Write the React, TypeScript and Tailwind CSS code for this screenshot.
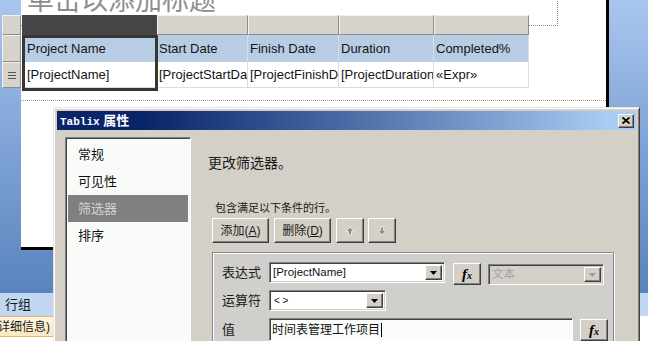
import type { ReactNode } from "react";

const handle =
  "bg-[#d6d3cd] border border-t-[#f2f1ee] border-l-[#f2f1ee] border-r-[#8e8c88] border-b-[#8e8c88]";

function Raised({ className = "", children }: { className?: string; children?: ReactNode }) {
  return (
    <div
      className={`flex items-center justify-center bg-[#d4d0c8] border border-t-white border-l-white border-r-[#404040] border-b-[#404040] shadow-[inset_-1px_-1px_0_#808080] ${className}`}
    >
      {children}
    </div>
  );
}

function DropArrow({ disabled }: { disabled?: boolean }) {
  return (
    <Raised className="w-[17px] h-full shrink-0">
      <svg width="7" height="4" viewBox="0 0 7 4">
        <path d="M0 0h7L3.5 4z" fill={disabled ? "#9a9a9a" : "#000"} />
      </svg>
    </Raised>
  );
}

function Combo({ width, text, disabled, small }: { width: string; text: string; disabled?: boolean; small?: boolean }) {
  return (
    <div
      className={`${width} h-[21px] flex p-[2px] border border-t-[#808080] border-l-[#808080] border-r-white border-b-white shadow-[inset_1px_1px_0_#404040,inset_-1px_-1px_0_#d4d0c8] ${
        disabled ? "bg-[#d4d0c8]" : "bg-white"
      }`}
    >
      <div
        className={`flex-1 flex items-center pl-[1px] whitespace-nowrap overflow-hidden ${
          small ? "text-[10px] pl-[2px]" : "text-[11.5px]"
        } ${disabled ? "text-[#a3a3a3]" : "text-[#111]"}`}
      >
        {text}
      </div>
      <DropArrow disabled={disabled} />
    </div>
  );
}

function Fx({ className = "" }: { className?: string }) {
  return (
    <Raised className={`w-[28px] h-[22px] ${className}`}>
      <span className="font-['Liberation_Serif',serif] italic font-bold text-[15px] leading-none text-black">
        f<span className="text-[10px]">x</span>
      </span>
    </Raised>
  );
}

function Arrow({ up }: { up?: boolean }) {
  return (
    <svg width="10" height="10" viewBox="0 0 10 10">
      <path
        d={up ? "M5 1l4 4.5H6.5V9h-3V5.5H1z" : "M5 9l4-4.5H6.5V1h-3v3.5H1z"}
        fill="#8f8f8f"
        stroke="#fbfbfb"
        strokeWidth="0.7"
      />
    </svg>
  );
}

function ReportTable() {
  const heads = ["Project Name", "Start Date", "Finish Date", "Duration", "Completed%"];
  const data = ["[ProjectName]", "[ProjectStartDate]", "[ProjectFinishDate]", "[ProjectDuration]", "«Expr»"];
  return (
    <div className="relative ml-[1px] w-[507px]">
      <div className="grid grid-cols-[135px_91px_91px_95px_95px] text-[13px]">
        <div className="h-[20px] bg-[#454545]" />
        {[1, 2, 3, 4].map((i) => (
          <div key={i} className={`h-[20px] ${handle}`} />
        ))}
        {heads.map((h, i) => (
          <div
            key={h}
            className={`h-[27px] flex items-center bg-[#b8cce4] border-r border-[#d3dfee] text-[#141414] whitespace-nowrap overflow-hidden ${
              i === 0 ? "pl-[5px]" : "pl-[2px]"
            }`}
          >
            {h}
          </div>
        ))}
        {data.map((d, i) => (
          <div
            key={d}
            className={`h-[26px] flex items-center bg-white border-r border-b border-[#dcdcdc] text-[#141414] whitespace-nowrap overflow-hidden ${
              i === 0 ? "pl-[5px]" : "pl-[2px]"
            }`}
          >
            {d}
          </div>
        ))}
      </div>
      <div className="absolute left-0 top-[20px] w-[136px] h-[56px] border-[3px] border-[#363636]" />
    </div>
  );
}

function FilterDialog() {
  const pages = ["常规", "可见性", "筛选器", "排序"];
  return (
    <div className="absolute left-[53px] top-[107px] w-[587px] h-[240px] p-[3px] bg-[#d4d0c8] border border-t-[#e4e2dc] border-l-[#e4e2dc] border-r-[#404040] border-b-[#404040] shadow-[inset_1px_1px_0_#fff,inset_-1px_-1px_0_#808080]">
      <div className="h-[19px] flex items-center justify-between pl-[3px] pr-[2px] bg-linear-to-r from-[#0a246a] from-15% to-[#a8ccf2] to-95%">
        <span className="text-white font-bold text-[13px] leading-none">
          <span className="font-['Liberation_Mono',monospace] text-[11px]">Tablix</span> 属性
        </span>
        <Raised className="w-[16px] h-[14px]">
          <svg width="8" height="7" viewBox="0 0 8 7">
            <path d="M0.5 0.5l7 6M7.5 0.5l-7 6" stroke="#000" strokeWidth="1.8" />
          </svg>
        </Raised>
      </div>

      <div className="flex pt-[7px] pl-[8px]">
        <div className="w-[126px] h-[220px] p-[2px] bg-[#f9fbf9] border border-t-[#808080] border-l-[#808080] border-r-white border-b-white shadow-[inset_1px_1px_0_#404040]">
          <div className="pt-[1px]">
            {pages.map((p, i) => (
              <div
                key={p}
                className={`h-[27px] flex items-center pl-[10px] text-[13px] ${
                  i === 2 ? "bg-[#808080] text-[#d2d2d2]" : "text-[#111]"
                }`}
              >
                {p}
              </div>
            ))}
          </div>
        </div>

        <div className="flex flex-col pl-[21px]">
          <div className="mt-[18px] -ml-[4px] text-[14px] leading-[16px] text-[#1a1a1a]">更改筛选器。</div>
          <div className="mt-[30px] ml-[3px] text-[11px] leading-[14px] text-[#1a1a1a]">包含满足以下条件的行。</div>
          <div className="mt-[3px] flex text-[12px] text-[#1a1a1a]">
            <Raised className="w-[57px] h-[25px]">
              添加(<span className="underline">A</span>)
            </Raised>
            <Raised className="ml-[5px] w-[57px] h-[25px]">
              删除(<span className="underline">D</span>)
            </Raised>
            <Raised className="ml-[5px] w-[28px] h-[25px]">
              <Arrow up />
            </Raised>
            <Raised className="ml-[4px] w-[28px] h-[25px]">
              <Arrow />
            </Raised>
          </div>

          <div className="mt-[9px] w-[402px] h-[120px] pl-[9px] pt-[9px] bg-[#d0cfcc] border border-[#8a8a8a] shadow-[inset_1px_1px_0_#fff,1px_1px_0_#fff] flex flex-col gap-[7px] text-[13px] text-[#1a1a1a]">
            <div className="h-[21px] flex items-start">
              <div className="w-[47px] h-[21px] flex items-center">表达式</div>
              <Combo width="w-[176px]" text="[ProjectName]" />
              <Fx className="ml-[8px] mt-[1px]" />
              <div className="ml-[7px] mt-[2px]">
                <Combo width="w-[116px]" text="文本" disabled />
              </div>
            </div>
            <div className="h-[21px] flex items-start">
              <div className="w-[47px] h-[21px] flex items-center">运算符</div>
              <Combo width="w-[117px]" text="< >" small />
            </div>
            <div className="h-[23px] flex items-start">
              <div className="w-[47px] h-[23px] flex items-center">值</div>
              <div className="w-[304px] h-[23px] flex items-center pl-[2px] bg-[#fbfdfb] border border-t-[#808080] border-l-[#808080] border-r-white border-b-white shadow-[inset_1px_1px_0_#404040] text-[12px] text-[#111]">
                时间表管理工作项目
                <span className="ml-[1px] w-[1px] h-[14px] bg-black" />
              </div>
              <Fx className="ml-[7px] mt-[1px]" />
            </div>
          </div>
        </div>
      </div>
    </div>
  );
}

export default function App() {
  return (
    <div className="relative w-[648px] h-[341px] overflow-hidden bg-white font-['Liberation_Sans','Noto_Sans_CJK_SC',sans-serif]">
      <div className="flex h-[293px] bg-linear-to-b from-[#a9c6ee] via-[#7fa3d6] to-[#5a83bd]">
        <div className="w-[21px] shrink-0 pt-[15px] pl-[2px] flex flex-col">
          <div className={`h-[20px] ${handle}`} />
          <div className={`h-[27px] ${handle}`} />
          <div className={`h-[26px] flex items-center justify-center ${handle}`}>
            <svg width="8" height="7" viewBox="0 0 8 7">
              <path d="M0 0.5h8M0 3.5h8M0 6.5h8" stroke="#555" strokeWidth="1" />
            </svg>
          </div>
        </div>

        <div className="relative w-[588px] h-[250px] shrink-0 bg-white border-r-[3px] border-b-[3px] border-black">
          <div className="absolute left-0 top-[-2px] w-[537px] h-[28px] border-r border-b border-dotted border-[#8a8a8a]" />
          <div className="relative h-[15px] flow-root">
            <p className="-mt-[14px] ml-[6px] text-[27px] leading-[30px] text-[#8e8e8e] whitespace-nowrap">
              单击以添加标题
            </p>
          </div>
          <ReportTable />
          <div className="h-[13px] border-b border-dotted border-[#9a9a9a]" />
        </div>
      </div>

      <div className="h-[23px] pl-[5px] flex items-center bg-[#c2d8f2] text-[13px] text-[#1a1a1a]">行组</div>
      <div className="w-[170px] h-[21px] -ml-[6px] flex items-center bg-linear-to-b from-[#fdf5e2] to-[#fbe8c2] border-y border-[#eab36a] text-[12px] text-[#1a1a1a]">
        (详细信息)
      </div>

      <FilterDialog />
    </div>
  );
}
